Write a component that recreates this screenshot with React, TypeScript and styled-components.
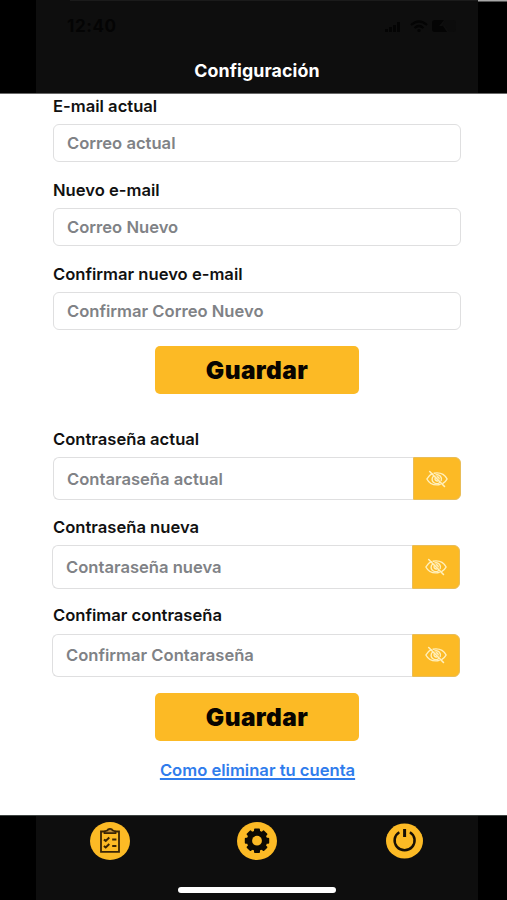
import React from "react";
import styled, { createGlobalStyle } from "styled-components";

const amber = "#fcba25";

const GlobalStyle = createGlobalStyle`
  *, *::before, *::after { box-sizing: border-box; }
  body { margin: 0; background: #fff; }
  body, input, button { font-family: Inter, "Liberation Sans", sans-serif; }
`;

const Screen = styled.div`
  display: flex;
  flex-direction: column;
  width: 507px;
  height: 900px;
  overflow: hidden;
  background: #fff;
`;

const Bar = styled.div`
  display: flex;
  flex: none;
  padding: 0 29px 0 36px;
  background: #000;
`;

const TopBar = styled(Bar)`
  height: 94px;
  border-bottom: 1px solid #686868;
  background: linear-gradient(#a8a8a8, #a8a8a8) right top / 29px 1.5px no-repeat, #000;
`;

const TopInner = styled.header`
  flex: 1;
  display: flex;
  flex-direction: column;
  align-items: center;
  background: linear-gradient(#1b1b1b, #1b1b1b) right top / 408px 1px no-repeat, #0e0e0e;
`;

const StatusRow = styled.div`
  align-self: stretch;
  display: flex;
  justify-content: space-between;
  align-items: center;
  height: 20px;
  margin-top: 16px;
  padding: 0 17px 0 31px;
  color: #040404;
`;

const Clock = styled.span`
  font-size: 17px;
  font-weight: 700;
  letter-spacing: 0.6px;
`;

const StatusIcons = styled.svg`
  display: block;
  width: 76px;
  height: 16px;
`;

const Title = styled.h1`
  margin: 24px 0 0;
  font-size: 17.8px;
  line-height: 22px;
  font-weight: 700;
  letter-spacing: 0.1px;
  color: #fff;
`;

const Main = styled.main`
  flex: 1;
  display: flex;
  flex-direction: column;
  padding: 0.6px 46px 0 53px;
`;

const Form = styled.form<{ $gap: number }>`
  display: flex;
  flex-direction: column;
  gap: ${(p) => p.$gap}px;
`;

const Field = styled.div<{ $gap: number }>`
  display: flex;
  flex-direction: column;
  gap: ${(p) => p.$gap}px;
`;

const Label = styled.label`
  height: 22px;
  font-size: 16.6px;
  line-height: 22px;
  font-weight: 600;
  white-space: nowrap;
  color: #111;
`;

const TextInput = styled.input`
  flex: 1;
  min-width: 0;
  height: 38px;
  padding: 0 13px;
  border: 1.5px solid #dfdfe0;
  border-radius: 6px;
  outline: none;
  background: #fff;
  font-size: 16.6px;
  font-weight: 600;
  &::placeholder { color: #808286; opacity: 1; }
`;

const EmailInput = styled(TextInput)`
  flex: none;
  width: 408px;
`;

const PasswordGroup = styled.div<{ $shift: boolean }>`
  display: flex;
  width: 408px;
  height: 43.5px;
  margin-left: ${(p) => (p.$shift ? -1 : 0)}px;
`;

const PasswordInput = styled(TextInput)`
  height: 100%;
  border-right: 0;
  border-radius: 6px 0 0 6px;
`;

const RevealButton = styled.button`
  display: grid;
  place-items: center;
  width: 48.5px;
  padding: 0;
  border: 1px solid #e9bd58;
  border-radius: 0 6px 6px 0;
  background: ${amber};
  color: #fff0bd;
`;

const SaveButton = styled.button`
  width: 204px;
  height: 48px;
  margin: 0 0 0 102px;
  padding: 0;
  border: 0;
  border-radius: 5px;
  background: ${amber};
  color: #080400;
  font-size: 24.4px;
  font-weight: 900;
  letter-spacing: 0.4px;
`;

const Spacer = styled.div<{ $h: number }>`
  flex: none;
  height: ${(p) => p.$h}px;
`;

const HelpLink = styled.a`
  align-self: center;
  margin: 18px 0 0 1px;
  font-size: 16.6px;
  line-height: 22px;
  font-weight: 600;
  color: #2f7cec;
  text-decoration: underline;
  text-decoration-thickness: 1.5px;
  text-underline-offset: 2px;
  text-decoration-skip-ink: none;
`;

const BottomBar = styled(Bar)`
  height: 85px;
  border-top: 1px solid #3d4341;
`;

const BottomInner = styled.footer`
  flex: 1;
  display: flex;
  flex-direction: column;
  align-items: center;
  background: #0e0e0e;
`;

const Nav = styled.nav`
  align-self: stretch;
  display: grid;
  grid-template-columns: repeat(3, 147.33px);
  justify-items: center;
  margin-top: 5px;
`;

const NavButton = styled.button`
  display: block;
  width: 40px;
  height: 40px;
  padding: 0;
  border: 0;
  background: none;
  svg { display: block; }
`;

const HomeIndicator = styled.div`
  width: 158px;
  height: 5.5px;
  margin: 26px 0 0;
  border-radius: 3px;
  background: #fff;
`;

const EyeOff = () => (
  <svg width="22" height="18" viewBox="0 0 22 18" fill="none" stroke="currentColor" strokeWidth="1.4" strokeLinecap="round">
    <path d="M6.2 3.7C3.6 5 1.8 7.1.9 9c1.8 3.6 5.5 5.9 10.1 5.9 1.1 0 2.2-.2 3.2-.5" />
    <path d="M8.1 3.2C9 3 10 2.9 11 2.9c4.6 0 8.3 2.6 10.1 6.1-.8 1.6-2.2 3.2-4.2 4.3" />
    <path d="M7.5 6.3a4.5 4.2 0 0 0 6.2 6.1M10 4.9a4.5 4.2 0 0 1 5.2 5.6" />
    <path d="M9.1 8.3a2.2 2.2 0 0 0 2.5 2.7M11.2 6.8a2.2 2.2 0 0 1 2 2" />
    <path d="M3.7 1.5l14.8 15" strokeWidth="1.6" />
  </svg>
);

const ClipboardIcon = () => (
  <svg width="40" height="40" viewBox="0 0 40 40" fill="none" stroke="#3a2505" strokeWidth="1.8">
    <ellipse cx="20" cy="20" rx="20" ry="19" fill={amber} stroke="none" />
    <path d="M15.5 10.5H11v20.3h18V10.5h-4" />
    <path d="M14.5 12.2h11v-1.7l-3-1.2c-.5-2-4.5-2-5 0l-3 1.2z" fill="#b98a38" />
    <path d="M13.9 18.5l1.8 1.4 3.6-3.3M13.9 25l1.8 1.4 3.6-3.3M22.2 18.6h4.2M22.2 25h4.2" strokeWidth="2" />
  </svg>
);

const GearIcon = () => (
  <svg width="40" height="40" viewBox="0 0 40 40">
    <ellipse cx="20" cy="20" rx="20" ry="19" fill={amber} />
    <g fill="#0d0a03">
      <circle cx="20" cy="19.7" r="10.2" />
      {[0, 45, 90, 135].map((a) => (
        <rect key={a} x="17" y="7.5" width="6" height="24.4" rx="1" transform={`rotate(${a} 20 19.7)`} />
      ))}
    </g>
    <circle cx="20" cy="19.7" r="4.9" fill={amber} />
  </svg>
);

const PowerIcon = () => (
  <svg width="40" height="40" viewBox="0 0 40 40" fill="none" stroke="#171005" strokeWidth="2.5">
    <ellipse cx="20.5" cy="20" rx="18.5" ry="17.5" fill={amber} stroke="none" />
    <path d="M15.3 11.3a10 9.7 0 1 0 10.6 0" />
    <path d="M20.6 8v8" strokeWidth="3" />
  </svg>
);

const emailFields = [
  { label: "E-mail actual", hint: "Correo actual" },
  { label: "Nuevo e-mail", hint: "Correo Nuevo" },
  { label: "Confirmar nuevo e-mail", hint: "Confirmar Correo Nuevo" },
];

const passwordFields = [
  { label: "Contraseña actual", hint: "Contaraseña actual" },
  { label: "Contraseña nueva", hint: "Contaraseña nueva" },
  { label: "Confimar contraseña", hint: "Confirmar Contaraseña" },
];

export default function App() {
  return (
    <>
      <GlobalStyle />
      <Screen>
        <TopBar>
          <TopInner>
            <StatusRow>
              <Clock>12:40</Clock>
              <StatusIcons viewBox="0 0 76 16" fill="currentColor">
                <path d="M0 11h3v3H0zM4 9h3v5H4zM8 7h3v7H8zM12 4h3v10h-3z" />
                <g fill="none" stroke="currentColor" strokeWidth="2.2">
                  <path d="M26 7q8-7 16 0M29.5 10q4.5-4 9 0" />
                </g>
                <circle cx="34" cy="12.5" r="1.6" />
                <path d="M50 2h9l-5 6h4l4 6H50q-3 0-3-3V5q0-3 3-3z" />
                <path d="M60 2h8q3 0 3 3v6q0 3-3 3h-4l-4-6h-3z" opacity="0.2" />
              </StatusIcons>
            </StatusRow>
            <Title>Configuración</Title>
          </TopInner>
        </TopBar>

        <Main>
          <Form $gap={17.3}>
            {emailFields.map((f, i) => (
              <Field key={f.label} $gap={7}>
                <Label htmlFor={`email-${i}`}>{f.label}</Label>
                <EmailInput id={`email-${i}`} placeholder={f.hint} />
              </Field>
            ))}
          </Form>
          <Spacer $h={16} />
          <SaveButton type="button">Guardar</SaveButton>
          <Spacer $h={33.4} />
          <Form $gap={15.7}>
            {passwordFields.map((f, i) => (
              <Field key={f.label} $gap={7.2}>
                <Label htmlFor={`pass-${i}`}>{f.label}</Label>
                <PasswordGroup $shift={i > 0}>
                  <PasswordInput id={`pass-${i}`} type="password" placeholder={f.hint} />
                  <RevealButton type="button" aria-label="Mostrar contraseña"><EyeOff /></RevealButton>
                </PasswordGroup>
              </Field>
            ))}
          </Form>
          <Spacer $h={16.4} />
          <SaveButton type="button">Guardar</SaveButton>
          <HelpLink>Como eliminar tu cuenta</HelpLink>
        </Main>

        <BottomBar>
          <BottomInner>
            <Nav>
              <NavButton aria-label="Tareas"><ClipboardIcon /></NavButton>
              <NavButton aria-label="Ajustes"><GearIcon /></NavButton>
              <NavButton aria-label="Salir"><PowerIcon /></NavButton>
            </Nav>
            <HomeIndicator />
          </BottomInner>
        </BottomBar>
      </Screen>
    </>
  );
}
